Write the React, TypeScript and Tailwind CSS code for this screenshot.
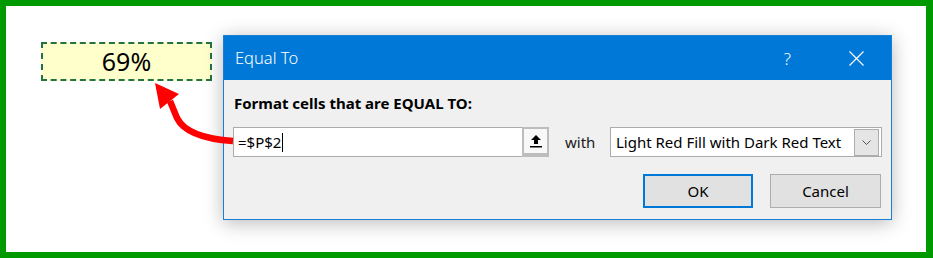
import React from 'react'

const ui = { fontFamily: '"Noto Sans", "Open Sans", sans-serif' }

function UploadIcon() {
  return (
    <svg width="12" height="14" viewBox="0 0 12 14">
      <path d="M6 1 L11 6 L8 6 L8 10 L4 10 L4 6 L1 6 Z" fill="#000" />
      <rect x="0" y="12" width="12" height="1.5" fill="#000" />
    </svg>
  )
}

export default function App() {
  return (
    <div className="relative w-[933px] h-[258px] bg-white border-[#009900] border-t-[6px] border-l-[6px] border-r-[7px] border-b-[6px] overflow-hidden" style={ui}>
      <div className="flex items-start pl-[35px] pt-[29px]">
        {/* the excel cell */}
        <div className="mt-[7px] w-[171px] h-[39px] bg-[#ffffcc] border-2 border-dashed border-[#237244] flex items-center justify-center text-[25px] text-black leading-none">
          69%
        </div>

        {/* dialog */}
        <div className="ml-[11px] w-[669px] h-[185px] border border-[#1a7fd4] bg-[#f0f0f0] flex flex-col shadow-[0_3px_18px_rgba(0,0,0,0.28)]">
          <div className="h-[44px] bg-[#0078d7] flex items-center pl-[11px] text-white">
            <span className="flex-1 text-[16.5px] font-light">Equal To</span>
            <span className="text-[17px] font-light leading-none">?</span>
            <svg className="ml-[58px] mr-[27px]" width="15" height="15" viewBox="0 0 15 15">
              <path d="M0.5 0.5 L14.5 14.5 M14.5 0.5 L0.5 14.5" stroke="#fff" strokeWidth="1.2" />
            </svg>
          </div>

          <div className="flex-1 flex flex-col pl-[9px] pr-[9px] pt-[13px]">
            <div className="h-[20px] leading-[20px] ml-px text-[15px] font-bold text-black">
              Format cells that are EQUAL TO:
            </div>

            <div className="mt-[14px] flex items-center">
              <div className="w-[316px] h-[30px] bg-white border border-[#acacac] flex items-center">
                <span className="flex-1 flex items-center pl-[4px] text-[15px] text-black">
                  =$P$2
                  <span className="ml-px w-px h-[19px] bg-black" />
                </span>
                <div className="w-[27px] h-[30px] -mr-px -my-px bg-[#bdbdbd] pt-[2px] pb-[4px] px-[2px]">
                  <div className="w-full h-full bg-[#f8f8f8] flex items-center justify-center">
                    <UploadIcon />
                  </div>
                </div>
              </div>
              <span className="ml-[16px] text-[15px] text-[#1a1a1a]">with</span>
              <div className="ml-auto w-[272px] h-[30px] bg-white border border-[#acacac] flex items-center">
                <span className="flex-1 pl-[5px] text-[15px] text-black whitespace-nowrap">
                  Light Red Fill with Dark Red Text
                </span>
                <div className="w-[25px] h-[27px] mr-[2px] bg-[#e5e5e5] border border-[#adadad] flex items-center justify-center">
                  <svg width="9" height="5" viewBox="0 0 9 5">
                    <path d="M0.5 0.5 L4.5 4.5 L8.5 0.5" stroke="#555" strokeWidth="1" fill="none" />
                  </svg>
                </div>
              </div>
            </div>

            <div className="mt-[17px] flex justify-end gap-[17px] mr-px">
              <button className="w-[110px] h-[34px] bg-[#e1e1e1] border-2 border-[#0078d7] text-[15px] text-black">
                OK
              </button>
              <button className="w-[111px] h-[34px] bg-[#e1e1e1] border border-[#adadad] text-[15px] text-black">
                Cancel
              </button>
            </div>
          </div>
        </div>
      </div>

      {/* red arrow drawn over the page */}
      <svg className="absolute -left-[6px] -top-[6px] pointer-events-none" width="933" height="258" viewBox="0 0 933 258">
        <path d="M233 141 C203 139 184 132 177 118 L170 101" stroke="#ff0000" strokeWidth="6.5" fill="none" strokeLinejoin="round" />
        <path d="M155 83 L179 94 L160 109 Z" fill="#ff0000" />
      </svg>
    </div>
  )
}
